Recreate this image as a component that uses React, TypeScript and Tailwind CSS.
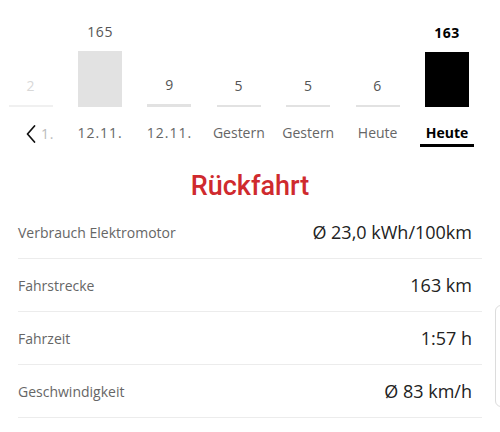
type Day = {
  value: number;
  label: string;
  faded?: boolean;
  selected?: boolean;
};

const days: Day[] = [
  { value: 2, label: '1.', faded: true },
  { value: 165, label: '12.11.' },
  { value: 9, label: '12.11.' },
  { value: 5, label: 'Gestern' },
  { value: 5, label: 'Gestern' },
  { value: 6, label: 'Heute' },
  { value: 163, label: 'Heute', selected: true },
];

const stats = [
  { label: 'Verbrauch Elektromotor', value: 'Ø 23,0 kWh/100km' },
  { label: 'Fahrstrecke', value: '163 km' },
  { label: 'Fahrzeit', value: '1:57 h' },
  { label: 'Geschwindigkeit', value: 'Ø 83 km/h' },
];

const MAX = 165;
const BAR_MAX = 56;

function Column({ day }: { day: Day }) {
  const h = Math.max(2, Math.round((day.value / MAX) * BAR_MAX));
  let barColor = 'bg-[#e2e2e2]';
  if (day.selected) barColor = 'bg-black';
  if (day.faded) barColor = 'bg-[#f0f0f0]';

  return (
    <div className="flex h-[107px] w-[69.4px] shrink-0 flex-col items-center justify-end">
      <span
        className={`mb-[11px] text-[14px] leading-4 tracking-[0.6px] ${
          day.selected ? 'font-bold text-black' : day.faded ? 'text-[#d8d8d8]' : 'text-[#555]'
        }`}
      >
        {day.value}
      </span>
      <div className={`w-[44px] ${barColor}`} style={{ height: h }} />
    </div>
  );
}

export default function App() {
  return (
    <div className="relative h-[432px] w-[500px] overflow-hidden bg-white font-['Open_Sans',sans-serif]">
      {/* chart */}
      <div className="ml-[-4px] flex">
        {days.map((d, i) => (
          <Column key={i} day={d} />
        ))}
      </div>

      {/* day labels */}
      <div className="ml-[-4px] mt-[18px] flex">
        {days.map((d, i) => (
          <div key={i} className="flex w-[69.4px] shrink-0 flex-col items-center">
            {i === 0 ? (
              <div className="flex items-center self-start pl-[30px] text-[14px] leading-4 text-[#bbb]">
                <svg width="10" height="18" viewBox="0 0 10 18" className="mr-[5px]">
                  <polyline
                    points="8.5,1 1.5,9 8.5,17"
                    fill="none"
                    stroke="#111"
                    strokeWidth="1.7"
                    strokeLinecap="round"
                    strokeLinejoin="round"
                  />
                </svg>
                <span className="tracking-[0.8px]">{d.label}</span>
              </div>
            ) : (
              <span
                className={`text-[14px] leading-4 ${
                  /\d/.test(d.label) ? 'tracking-[1px]' : ''
                } ${d.selected ? 'font-bold text-black' : 'text-[#666]'}`}
              >
                {d.label}
              </span>
            )}
            {d.selected && <div className="mt-[3px] h-[3px] w-[54px] bg-black" />}
          </div>
        ))}
      </div>

      {/* title */}
      <div className="mt-[20px] flex h-[39px] items-center justify-center font-['Roboto',sans-serif] text-[27px] font-medium text-[#cf2a2e]">
        Rückfahrt
      </div>

      {/* stats */}
      <div className="mx-[18px]">
        {stats.map((s) => (
          <div
            key={s.label}
            className="flex h-[53px] items-center justify-between border-b border-[#ececec] pr-[10px] pt-[1px]"
          >
            <span className="text-[14px] text-[#666]">{s.label}</span>
            <span className="text-[18px] text-[#222]">{s.value}</span>
          </div>
        ))}
      </div>

      {/* edge of neighbouring card */}
      <div className="absolute left-[495px] top-[305px] h-[102px] w-[20px] rounded-[6px] border border-[#dcdcdc]" />
    </div>
  );
}
